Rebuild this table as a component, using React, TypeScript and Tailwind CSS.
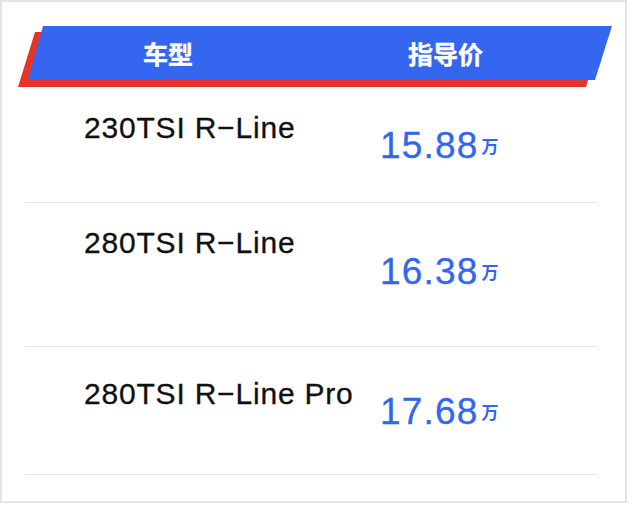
import React from "react";

type Row = {
  name: string;
  price: string;
  rowClass: string;
  nameClass: string;
  priceClass: string;
};

const rows: Row[] = [
  { name: "230TSI R−Line", price: "15.88", rowClass: "h-[116px]", nameClass: "pt-[26px]", priceClass: "pt-[40px]" },
  { name: "280TSI R−Line", price: "16.38", rowClass: "h-[144px]", nameClass: "pt-[25px]", priceClass: "pt-[50px]" },
  { name: "280TSI R−Line Pro", price: "17.68", rowClass: "h-[128px]", nameClass: "pt-[32px]", priceClass: "pt-[46px]" },
];

export default function App() {
  return (
    <div className="w-[630px] h-[505px] bg-white font-['Liberation_Sans','Noto_Sans_CJK_SC',sans-serif]">
      <div className="w-[627px] h-[503px] border-2 border-[#e4e4e4]">
        {/* Header banner */}
        <div className="relative ml-[16px] mt-[24px] w-[594px] h-[61px]">
          <div className="absolute inset-0 bg-[#e5352b] [clip-path:polygon(17px_6px,584px_6px,568px_61px,0px_61px)]" />
          <div className="absolute inset-0 bg-[#3466f0] [clip-path:polygon(25px_0px,594px_0px,577px_54px,10px_54px)]" />
          <div className="relative flex h-[54px] items-center text-white font-bold text-[25px] leading-none font-['Noto_Sans_CJK_SC',sans-serif] [-webkit-text-stroke:0.4px_#ffffff]">
            <div className="w-[300px] text-center">车型</div>
            <div className="w-[255px] text-center">指导价</div>
          </div>
        </div>

        {/* Rows */}
        <div className="ml-[23px] w-[572px]">
          {rows.map((r) => (
            <div key={r.price} className={`flex border-b border-[#e3e3e3] ${r.rowClass}`}>
              <div className={`w-[355px] pl-[59px] ${r.nameClass}`}>
                <div className="text-[30px] leading-none tracking-[0.8px] text-[#111] [-webkit-text-stroke:0.3px_#111111]">{r.name}</div>
              </div>
              <div className={r.priceClass}>
                <div className="flex items-center text-[#3366ee]">
                  <span className="text-[37px] leading-none tracking-[1.2px] [-webkit-text-stroke:0.3px_#3366ee]">{r.price}</span>
                  <span className="ml-[3px] text-[17px] font-bold leading-none font-['Noto_Sans_CJK_SC',sans-serif]">万</span>
                </div>
              </div>
            </div>
          ))}
        </div>
      </div>
    </div>
  );
}
